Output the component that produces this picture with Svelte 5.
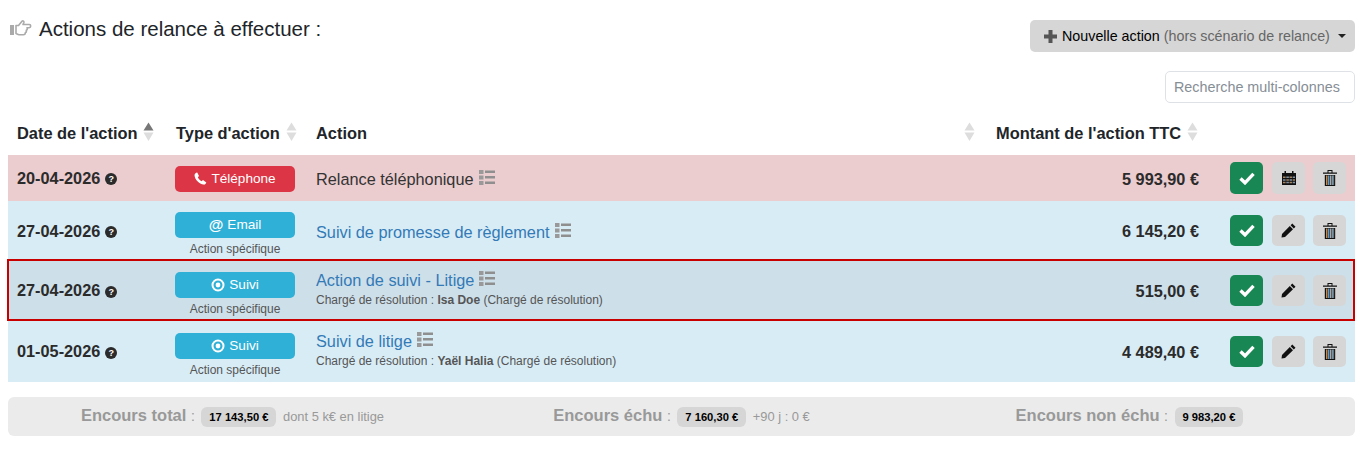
<script lang="ts">
  type Action = {
    date: string;
    type: "phone" | "email" | "suivi";
    label: string;
    specific: boolean;
    title: string;
    link: boolean;
    owner?: string;
    amount: string;
    tool: "calendar" | "pencil";
    tone: string;
  };

  const actions: Action[] = [
    { date: "20-04-2026", type: "phone", label: "Téléphone", specific: false, title: "Relance téléphonique", link: false, amount: "5 993,90 €", tool: "calendar", tone: "danger" },
    { date: "27-04-2026", type: "email", label: "Email", specific: true, title: "Suivi de promesse de règlement", link: true, amount: "6 145,20 €", tool: "pencil", tone: "info short" },
    { date: "27-04-2026", type: "suivi", label: "Suivi", specific: true, title: "Action de suivi - Litige", link: true, owner: "Isa Doe", amount: "515,00 €", tool: "pencil", tone: "selected" },
    { date: "01-05-2026", type: "suivi", label: "Suivi", specific: true, title: "Suivi de litige", link: true, owner: "Yaël Halia", amount: "4 489,40 €", tool: "pencil", tone: "info" },
  ];
</script>

{#snippet sort(active = false)}
  <svg class="sort" viewBox="0 0 11 20" width="11" height="20" aria-hidden="true">
    <path d="M5.5 0.5 L10.5 8.5 H0.5 Z" fill={active ? "#777" : "#ddd"} />
    <path d="M5.5 19 L0.5 10.5 H10.5 Z" fill="#ddd" />
  </svg>
{/snippet}

{#snippet listIcon()}
  <svg class="list-icon" viewBox="0 0 16 15" width="16" height="15" aria-hidden="true">
    <path fill="#999" d="M0 0h4.500v4H0zM0 5.500h4.500v4H0zM0 11h4.500v4H0z" />
    <path fill="#8f8f8f" d="M6 .5h10v2.500H6zM6 6h10v2.500H6zM6 11.500h10V14H6z" />
  </svg>
{/snippet}

<div class="page">
  <div class="top">
    <h2 class="title">
      <svg class="hand" viewBox="0 0 22 16" width="22" height="16" aria-hidden="true">
        <path fill="#aaa" d="M0 5h4v10H0z" />
        <path fill="none" stroke="#aaa" stroke-width="1.600" stroke-linejoin="round" d="M6 5.500h2.500L12 1.200c1-.8 2.300.1 1.800 1.400L13 4.500h6.200c2 0 2 3.200 0 3.200H17c.6 1.200.2 2.200-.7 2.600.3 1.200-.2 2.100-1 2.400.1 1.200-.6 2-1.800 2H9c-1.300 0-2-1-3-1.200z" />
      </svg>
      Actions de relance à effectuer :
    </h2>
    <button class="new-action">
      <svg viewBox="0 0 13 13" width="13" height="13" aria-hidden="true">
        <path fill="#555" d="M4.500 0h4v4.500H13v4H8.500V13h-4V8.500H0v-4h4.500z" />
      </svg>
      <span class="strong">Nouvelle action</span>
      <span class="muted">(hors scénario de relance)</span>
      <span class="caret"></span>
    </button>
  </div>

  <div class="search-row">
    <input class="search" type="text" placeholder="Recherche multi-colonnes" />
  </div>

  <div class="grid head">
    <div class="cell">Date de l'action {@render sort(true)}</div>
    <div class="cell">Type d'action {@render sort()}</div>
    <div class="cell spread">Action {@render sort()}</div>
    <div class="cell end">Montant de l'action TTC {@render sort()}</div>
    <div></div>
  </div>

  {#each actions as a}
    <div class="grid row {a.tone}">
      <div class="date">{a.date} <span class="help">?</span></div>
      <div class="type">
        <div class="badge" class:red={a.type === "phone"}>
          {#if a.type === "phone"}
            <svg viewBox="0 0 13 13" width="13" height="13" aria-hidden="true">
              <path fill="#fff" d="M3.200.5 5 3.900c-.5.700-1 1.100-1.200 1.400.8 1.700 2 3 3.800 4l1.400-1.200 3.300 2.500c-.4 1.300-1.500 2.200-2.700 2C5.300 12.200.7 7.400.5 3.200.5 2 1.800.7 3.200.5z" />
            </svg>
          {:else if a.type === "email"}
            <span class="at">@</span>
          {:else}
            <svg viewBox="0 0 14 14" width="14" height="14" aria-hidden="true">
              <circle cx="7" cy="7" r="5.500" fill="none" stroke="#fff" stroke-width="2" />
              <circle cx="7" cy="7" r="2.400" fill="#fff" />
            </svg>
          {/if}
          {a.label}
        </div>
        {#if a.specific}<div class="specific">Action spécifique</div>{/if}
      </div>
      <div class="action" class:with-owner={a.owner}>
        <div class="action-title" class:link={a.link}>{a.title} {@render listIcon()}</div>
        {#if a.owner}
          <div class="owner">Chargé de résolution : <b>{a.owner}</b> (Chargé de résolution)</div>
        {/if}
      </div>
      <div class="amount">{a.amount}</div>
      <div class="tools">
        <button class="tool green" aria-label="Valider">
          <svg viewBox="0 0 16 13" width="16" height="13" aria-hidden="true">
            <path fill="none" stroke="#fff" stroke-width="3.400" d="M1.500 6.500 6 10.800 14.500 1.800" />
          </svg>
        </button>
        <button class="tool" aria-label={a.tool === "calendar" ? "Reporter" : "Modifier"}>
          {#if a.tool === "calendar"}
            <svg viewBox="0 0 14 14" width="14" height="14" aria-hidden="true">
              <path fill="#111" d="M0 2h2.500V0H4v2h6V0h1.500v2H14v12H0z" />
              <path fill="#a8855f" d="M1 5.500h2.600V7H1zM7.500 5.500h2.600V7H7.500zM4.300 8.200h2.600v1.500H4.300zM10.700 8.200h2.300v1.500h-2.300zM1 10.800h2.600v1.500H1zM7.500 10.800h2.600v1.500H7.500z" />
              <path fill="#7d93a8" d="M4.300 5.500h2.600V7H4.300zM10.700 5.500h2.300V7h-2.300zM1 8.200h2.600v1.500H1zM7.500 8.200h2.600v1.500H7.500zM4.300 10.800h2.600v1.500H4.300zM10.700 10.800h2.300v1.500h-2.300z" />
            </svg>
          {:else}
            <svg viewBox="0 0 15 15" width="15" height="15" aria-hidden="true">
              <path fill="#111" d="M11.300.5 14.500 3.700 12.800 5.400 9.600 2.200zM8.800 3 12 6.200 4 14 .5 14.500 1 11z" />
            </svg>
          {/if}
        </button>
        <button class="tool" aria-label="Supprimer">
          <svg viewBox="0 0 14 16" width="14" height="16" aria-hidden="true">
            <path fill="#111" d="M0 2.500h14v1.200H0zM4.500 0h5v2.500H8.500V1h-3v1.500h-1z" />
            <path fill="#111" d="M1.800 5h10.400v11H1.800z" />
            <path fill="#c08a50" d="M3 5.500h1.500V15H3z" />
            <path fill="#5f9ac8" d="M5 5.500h1.500V15H5zM9 5.500h1.500V15H9z" />
            <path fill="#a9a9a9" d="M7 5.500h1.500V15H7z" />
            <path fill="#c08a50" d="M10.500 5.500h.6V15h-.6z" />
          </svg>
        </button>
      </div>
    </div>
  {/each}

  <div class="summary">
    <div>
      <span class="sum-label">Encours total</span> <span class="colon">:</span>
      <span class="pill">17 143,50 €</span>
      <span class="note">dont 5 k€ en litige</span>
    </div>
    <div>
      <span class="sum-label">Encours échu</span> <span class="colon">:</span>
      <span class="pill">7 160,30 €</span>
      <span class="note">+90 j : 0 €</span>
    </div>
    <div>
      <span class="sum-label">Encours non échu</span> <span class="colon">:</span>
      <span class="pill">9 983,20 €</span>
    </div>
  </div>
</div>

<style>
  :global(body) {
    margin: 0;
    background: #fff;
  }
  .page {
    padding: 20px 7px 0 8px;
    font-family: "Liberation Sans", Arial, sans-serif;
    font-size: 16.300px;
    color: #212529;
  }
  .top {
    display: flex;
    justify-content: space-between;
    align-items: flex-start;
  }
  .title {
    margin: -3px 0 0 2px;
    font-size: 20.500px;
    font-weight: 400;
    line-height: 24px;
    display: flex;
    align-items: center;
    gap: 7px;
  }
  .hand {
    margin-top: -3px;
  }
  .new-action {
    display: flex;
    align-items: center;
    height: 32px;
    width: 325px;
    padding: 0 9px 0 14px;
    border: 0;
    border-radius: 5px;
    background: #d6d6d6;
    font: inherit;
    font-size: 14.300px;
    color: #000;
    white-space: pre;
  }
  .strong {
    margin-left: 5px;
  }
  .muted {
    margin-left: 4px;
    color: #666;
  }
  .caret {
    margin-left: 8px;
    border-top: 4.500px solid #222;
    border-left: 4.500px solid transparent;
    border-right: 4.500px solid transparent;
  }
  .search-row {
    display: flex;
    justify-content: flex-end;
    margin-top: 19px;
  }
  .search {
    box-sizing: border-box;
    width: 190px;
    height: 32px;
    padding: 0 8px;
    border: 1px solid #dee2e6;
    border-radius: 5px;
    font: inherit;
    font-size: 14.350px;
    outline: none;
  }
  .search::placeholder {
    color: #868e96;
    opacity: 1;
  }
  .grid {
    display: grid;
    grid-template-columns: 159px 140px 1fr 220px 148px;
    align-items: center;
  }
  .head {
    box-sizing: border-box;
    height: 45px;
    margin-top: 7px;
    padding-top: 1px;
    font-size: 16.400px;
    font-weight: 700;
  }
  .cell {
    display: flex;
    align-items: center;
    gap: 6px;
    padding-left: 9px;
    white-space: nowrap;
  }
  .cell.spread {
    justify-content: space-between;
    padding-right: 12px;
  }
  .cell.end {
    padding-left: 9px;
  }
  .sort {
    margin-top: -3px;
  }
  .row {
    position: relative;
  }
  .danger {
    background: #ebcccf;
  }
  .info {
    background: #d8ecf5;
  }
  .selected {
    background: #cddfe9;
  }
  .selected::after {
    content: "";
    position: absolute;
    inset: -1px 0 0 -1px;
    border: 2px solid #c80000;
    pointer-events: none;
  }
  .date {
    padding-left: 9px;
    font-weight: 700;
    color: #2b2b2b;
    display: flex;
    align-items: center;
    gap: 5px;
  }
  .short .date {
    padding-top: 1px;
  }
  .help {
    display: inline-block;
    width: 12px;
    height: 12px;
    margin-top: 2px;
    border-radius: 50%;
    background: #2b2b2b;
    color: #fff;
    font-size: 9px;
    line-height: 12px;
    text-align: center;
  }
  .type {
    align-self: start;
    padding: 12px 12px 3px 8px;
  }
  .danger .type {
    padding: 11px 12px 9px 8px;
  }
  .short .type {
    padding: 11px 12px 2px 8px;
  }
  .badge {
    box-sizing: border-box;
    display: flex;
    align-items: center;
    justify-content: center;
    gap: 4px;
    height: 26px;
    padding-bottom: 1px;
    border-radius: 5px;
    background: #2fb0d6;
    color: #fff;
    font-size: 13.600px;
  }
  .badge.red {
    background: #dc3545;
  }
  .at {
    font-weight: 700;
    font-size: 15px;
  }
  .specific {
    margin-top: 2px;
    font-size: 12px;
    line-height: 18px;
    text-align: center;
    color: #555;
  }
  .action {
    padding-left: 9px;
    padding-top: 2px;
    min-width: 0;
    color: #333;
  }
  .action.with-owner {
    padding-top: 0;
    padding-bottom: 3px;
  }
  .action-title {
    line-height: 22px;
    display: flex;
    align-items: center;
    gap: 5px;
  }
  .with-owner .action-title {
    line-height: 20px;
  }
  .action-title.link {
    color: #337ab7;
  }
  .list-icon {
    margin-top: -3px;
  }
  .owner {
    margin-top: 2px;
    font-size: 12px;
    line-height: 17px;
    color: #555;
  }
  .amount {
    padding: 2px 8px 0 0;
    text-align: right;
    font-weight: 700;
    color: #2b2b2b;
  }
  .tools {
    display: flex;
    justify-content: flex-start;
    padding-left: 23px;
    gap: 9px;
  }
  .tool {
    display: flex;
    align-items: center;
    justify-content: center;
    width: 33px;
    height: 31px;
    padding: 0;
    border: 0;
    border-radius: 5px;
    background: #d6d6d6;
  }
  .tool:last-child {
    margin-left: -1px;
  }
  .tool.green {
    background: #198754;
  }
  .danger .tool {
    height: 32px;
  }
  .summary {
    display: grid;
    grid-template-columns: repeat(3, 1fr);
    align-items: center;
    height: 39px;
    margin-top: 15px;
    border-radius: 6px;
    background: #ebebeb;
    text-align: center;
    color: #999;
  }
  .sum-label {
    font-weight: 700;
    font-size: 16.500px;
  }
  .colon {
    font-size: 14px;
  }
  .pill {
    display: inline-block;
    margin: 0 2px;
    padding: 0 8px;
    border-radius: 6px;
    background: #d6d6d6;
    color: #000;
    font-size: 11.200px;
    font-weight: 700;
    line-height: 20px;
  }
  .note {
    font-size: 12.900px;
  }
</style>
